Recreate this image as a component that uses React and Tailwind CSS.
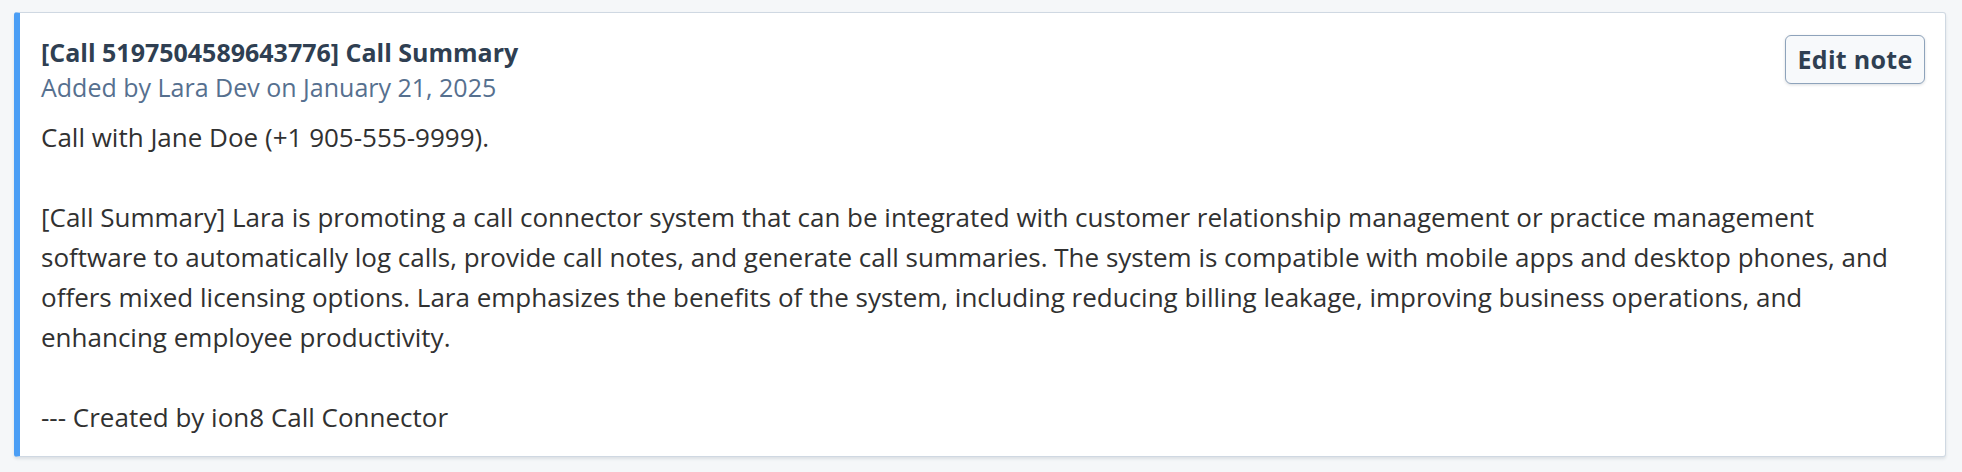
import React from 'react';

const body = `Call with Jane Doe (+1 905-555-9999).

[Call Summary] Lara is promoting a call connector system that can be integrated with customer relationship management or practice management
software to automatically log calls, provide call notes, and generate call summaries. The system is compatible with mobile apps and desktop phones, and
offers mixed licensing options. Lara emphasizes the benefits of the system, including reducing billing leakage, improving business operations, and
enhancing employee productivity.

--- Created by ion8 Call Connector`;

export default function App() {
  return (
    <div className="min-h-[472px] bg-[#f5f7f9] pl-[14px] pr-[16px] pt-[12px] pb-[15px] font-['Open_Sans',sans-serif]">
      <div className="bg-white border border-[#cfd8e2] border-l-[6px] border-l-[#4b9ef5] rounded-[3px] shadow-[0_2px_3px_rgba(45,62,80,0.12)] pl-[21px] pr-[20px] pt-[22px] pb-[19px]">
        <div className="flex items-start justify-between">
          <div>
            <p className="text-[25px] leading-[35px] font-bold text-[#2f3f52]">[Call 5197504589643776] Call Summary</p>
            <p className="text-[25px] leading-[35px] text-[#56708f]">Added by Lara Dev on January 21, 2025</p>
          </div>
          <button className="shrink-0 h-[49px] w-[140px] rounded-[6px] border border-[#8ea3bb] bg-[#f7f9fb] shadow-[0_1px_3px_rgba(45,62,80,0.18)] text-[25px] font-bold tracking-[0.3px] text-[#2f3f52]">
            Edit note
          </button>
        </div>
        <div className="mt-3 whitespace-pre-line text-[26px] leading-[40px] text-[#313131]">{body}</div>
      </div>
    </div>
  );
}
